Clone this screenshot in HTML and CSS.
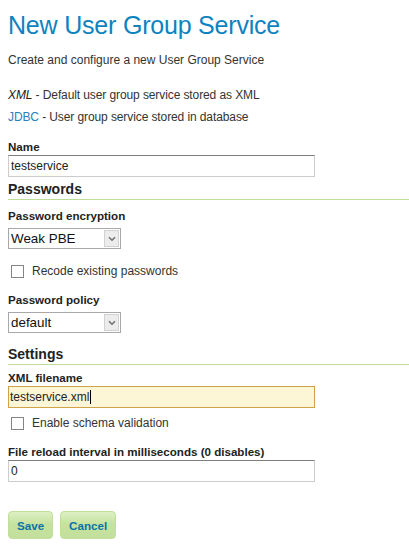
FILE: index.html
```html
<!DOCTYPE html>
<html lang="en">
<head>
<meta charset="utf-8">
<title>New User Group Service</title>
<link rel="stylesheet" href="styles.css">
</head>
<body>
<div class="page">
  <h1 class="title">New User Group Service</h1>
  <p class="intro">Create and configure a new User Group Service</p>
  <ul class="kinds">
    <li><em>XML</em> - Default user group service stored as XML</li>
    <li><a class="kind-link" href="#">JDBC</a> - User group service stored in database</li>
  </ul>

  <div class="field field-name">
    <div class="field-label">Name</div>
    <div class="text-input">testservice</div>
  </div>

  <h2 class="section-heading sec-passwords">Passwords</h2>

  <div class="field field-encryption">
    <div class="field-label">Password encryption</div>
    <div class="select">
      <span class="select-value">Weak PBE</span>
      <span class="select-arrow"><svg width="8" height="6" viewBox="0 0 8 6"><path d="M1 1.2 L4 4.2 L7 1.2" fill="none" stroke="#707070" stroke-width="1.6"/></svg></span>
    </div>
  </div>

  <div class="check-row check-recode">
    <span class="checkbox"></span>
    <span class="check-label">Recode existing passwords</span>
  </div>

  <div class="field field-policy">
    <div class="field-label">Password policy</div>
    <div class="select">
      <span class="select-value">default</span>
      <span class="select-arrow"><svg width="8" height="6" viewBox="0 0 8 6"><path d="M1 1.2 L4 4.2 L7 1.2" fill="none" stroke="#707070" stroke-width="1.6"/></svg></span>
    </div>
  </div>

  <h2 class="section-heading sec-settings">Settings</h2>

  <div class="field field-xml">
    <div class="field-label">XML filename</div>
    <div class="text-input focused">testservice.xml<span class="caret"></span></div>
  </div>

  <div class="check-row check-schema">
    <span class="checkbox"></span>
    <span class="check-label">Enable schema validation</span>
  </div>

  <div class="field field-reload">
    <div class="field-label">File reload interval in milliseconds (0 disables)</div>
    <div class="text-input">0</div>
  </div>

  <div class="buttons">
    <button class="btn" type="button">Save</button>
    <button class="btn" type="button">Cancel</button>
  </div>
</div>
</body>
</html>
```

FILE: styles.css
```css
html, body {
  margin: 0;
  padding: 0;
  background: #ffffff;
}

body {
  font-family: "Liberation Sans", Arial, sans-serif;
  font-size: 12px;
  color: #333333;
}

.page {
  padding: 0 0 0 8px;
}

.title {
  margin: 10px 0 0;
  font-size: 25px;
  letter-spacing: -0.2px;
  line-height: 30px;
  font-weight: normal;
  color: #0d83bf;
}

.intro {
  margin: 12px 0 0;
  line-height: 16px;
}

.kinds {
  list-style: none;
  margin: 16px 0 0;
  padding: 0;
  font-size: 12px;
  letter-spacing: -0.1px;
  line-height: 22px;
}

.kinds em {
  font-style: italic;
  color: #222222;
}

.kind-link {
  color: #2a7fb9;
  text-decoration: none;
}

.field-label {
  font-size: 11.6px;
  font-weight: bold;
  line-height: 16px;
  color: #222222;
}

.field-name { margin-top: 11px; }
.field-encryption { margin-top: 8px; }
.field-policy { margin-top: 14px; }
.field-xml { margin-top: 5px; }
.field-reload { margin-top: 14px; }

.text-input {
  box-sizing: border-box;
  width: 307px;
  height: 22px;
  padding: 0 2px;
  border: 1px solid #cccccc;
  border-top-color: #7d7d7d;
  line-height: 20px;
  font-size: 12px;
  color: #222222;
  background: #ffffff;
  white-space: nowrap;
}

.text-input.focused {
  background: #fcf6d6;
  border: 1px solid #cfa347;
  padding-left: 1px;
}

.caret {
  display: inline-block;
  width: 1px;
  height: 14px;
  margin-left: 1px;
  background: #000000;
  vertical-align: -3px;
}

.section-heading {
  margin: 0;
  font-size: 14px;
  font-weight: bold;
  line-height: 19px;
  color: #222222;
  border-bottom: 1px solid #bddc96;
}

.sec-passwords { margin-top: 3px; }
.sec-settings { margin-top: 12px; }

.select {
  box-sizing: border-box;
  display: flex;
  align-items: center;
  width: 113px;
  height: 21px;
  margin-top: 4px;
  border: 1px solid #a8a8a8;
  background: #ffffff;
}

.select-value {
  flex: 1;
  padding-left: 2px;
  font-size: 13.4px;
  color: #111111;
}

.select-arrow {
  box-sizing: border-box;
  display: flex;
  align-items: center;
  justify-content: center;
  width: 15px;
  height: 17px;
  margin-right: 1px;
  background: #ececec;
  border: 1px solid #d2d2d2;
}

.check-row {
  display: flex;
  align-items: center;
  height: 14px;
  padding-left: 3px;
}

.check-recode { margin-top: 15px; }
.check-schema { margin-top: 8px; }

.checkbox {
  box-sizing: border-box;
  width: 13px;
  height: 13px;
  border: 1px solid #858585;
  background: #ffffff;
}

.check-label {
  margin-left: 8px;
  line-height: 14px;
  color: #333333;
}

.buttons {
  display: flex;
  gap: 7px;
  margin-top: 29px;
}

.btn {
  box-sizing: border-box;
  height: 28px;
  padding: 0 8px;
  border: 1px solid #bfdf9a;
  border-radius: 4px;
  background: linear-gradient(#ddf0c4, #c6e29f 45%, #c3df9c);
  font-family: "Liberation Sans", Arial, sans-serif;
  font-size: 11.6px;
  font-weight: bold;
  color: #0b72aa;
  cursor: pointer;
}
```
